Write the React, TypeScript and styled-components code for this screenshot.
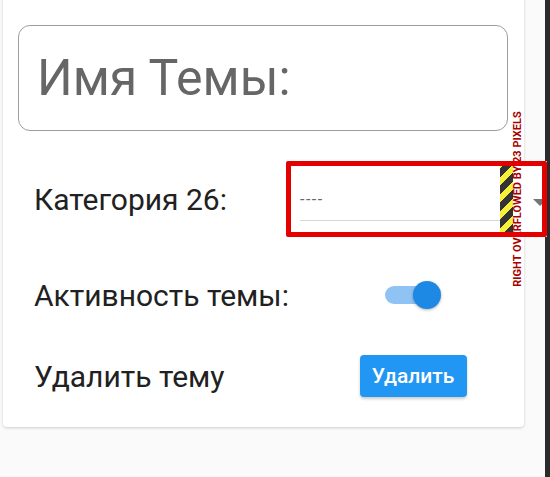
import styled, { createGlobalStyle } from "styled-components";

const GlobalStyle = createGlobalStyle`
  html, body {
    margin: 0;
    padding: 0;
    background: #fafafa;
    font-family: Roboto, "Noto Sans", sans-serif;
    overflow: hidden;
  }
`

const Screen = styled.div`
  display: flex;
  width: 550px;
  height: 477px;
`

const Main = styled.div`
  width: 545px;
  padding-left: 3px;
  box-sizing: border-box;
`

const Edge = styled.div`
  width: 5px;
  background: #2b2b2b;
`

const Card = styled.div`
  width: 521px;
  margin-top: -10px;
  padding: 35px 0 30px 15px;
  box-sizing: border-box;
  background: #ffffff;
  border-radius: 4px;
  box-shadow: 0 1px 3px rgba(0, 0, 0, 0.18);
  display: flex;
  flex-direction: column;
`

const NameField = styled.div`
  width: 490px;
  height: 106px;
  box-sizing: border-box;
  border: 1px solid #9e9e9e;
  border-radius: 12px;
  display: flex;
  align-items: center;
  padding-left: 18px;
  font-size: 50px;
  color: #666666;
`

const Row = styled.div<{ $height: number; $gap: number }>`
  display: flex;
  align-items: center;
  height: ${p => p.$height}px;
  margin-top: ${p => p.$gap}px;
  padding-left: 16px;
`

const Label = styled.div`
  width: 252px;
  flex-shrink: 0;
  white-space: nowrap;
  font-size: 30px;
  color: #212121;
`

const Control = styled.div`
  width: 254px;
  flex-shrink: 0;
  display: flex;
  justify-content: center;
  align-items: center;
  align-self: stretch;
`

const Dropdown = styled.div`
  position: relative;
  width: 261px;
  flex-shrink: 0;
  align-self: stretch;
  box-sizing: border-box;
  padding: 5px;
  background: #ffffff;
  display: flex;
  align-items: center;

  &::after {
    content: "";
    position: absolute;
    inset: 0;
    border: 5px solid #e50000;
    border-radius: 2px;
    z-index: 2;
  }
`

const Select = styled.div`
  margin-left: 9px;
  width: 212px;
  height: 44px;
  box-sizing: border-box;
  border-bottom: 1px solid #d6d6d6;
  display: flex;
  align-items: center;
  padding-top: 2px;
  font-size: 16px;
  color: #666666;
  letter-spacing: 1.5px;
`

const Hazard = styled.div`
  position: absolute;
  left: 214px;
  top: 5px;
  bottom: 5px;
  width: 13px;
  background: repeating-linear-gradient(
    -45deg,
    #333333 0 6px,
    #f5f03a 6px 12px
  );
`

const Arrow = styled.div`
  position: absolute;
  left: 247px;
  top: 38px;
  width: 0;
  height: 0;
  border-left: 7px solid transparent;
  border-right: 7px solid transparent;
  border-top: 7px solid #757575;
`

const OverflowNote = styled.div`
  position: absolute;
  left: 231px;
  top: 38px;
  width: 0;
  height: 0;
  display: flex;
  justify-content: center;
  align-items: center;
  white-space: nowrap;
  transform: rotate(-90deg);
  font-size: 11px;
  font-weight: 700;
  color: #a80000;
  z-index: 1;
`

const Switch = styled.div`
  position: relative;
  width: 56px;
  height: 28px;
  display: flex;
  align-items: center;
`

const Track = styled.div`
  width: 52px;
  height: 18px;
  border-radius: 9px;
  background: #8fc3f4;
`

const Thumb = styled.div`
  position: absolute;
  right: 0;
  top: 0;
  width: 28px;
  height: 28px;
  border-radius: 50%;
  background: #1e88e5;
  box-shadow: 0 1px 3px rgba(0, 0, 0, 0.3);
`

const DeleteButton = styled.button`
  width: 107px;
  height: 42px;
  border: none;
  border-radius: 4px;
  background: #2196f3;
  color: #ffffff;
  font-family: Roboto, sans-serif;
  font-size: 21px;
  font-weight: 500;
  box-shadow: 0 2px 3px rgba(0, 0, 0, 0.2);
`

export default function App() {
  return (
    <Screen>
      <GlobalStyle />
      <Main>
        <Card>
          <NameField>Имя Темы:</NameField>
          <Row $height={76} $gap={30}>
            <Label>Категория 26:</Label>
            <Dropdown>
              <Select>----</Select>
              <Hazard />
              <Arrow />
              <OverflowNote>RIGHT OVERFLOWED BY 23 PIXELS</OverflowNote>
            </Dropdown>
          </Row>
          <Row $height={40} $gap={38}>
            <Label>Активность темы:</Label>
            <Control>
              <Switch>
                <Track />
                <Thumb />
              </Switch>
            </Control>
          </Row>
          <Row $height={42} $gap={40}>
            <Label>Удалить тему</Label>
            <Control>
              <DeleteButton>Удалить</DeleteButton>
            </Control>
          </Row>
        </Card>
      </Main>
      <Edge />
    </Screen>
  )
}
